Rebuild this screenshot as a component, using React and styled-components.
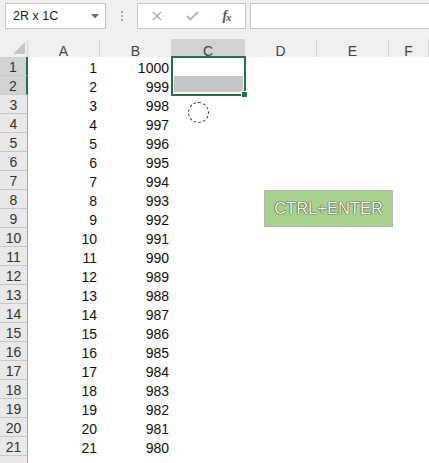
import styled, { createGlobalStyle } from 'styled-components';

const GlobalStyle = createGlobalStyle`
  body {
    margin: 0;
    background: #ffffff;
    font-family: 'Liberation Sans', Arial, sans-serif;
  }
`;

const Page = styled.div`
  position: relative;
  width: 429px;
  height: 463px;
  overflow: hidden;
  background: #ffffff;
`;

const Toolbar = styled.div`
  display: flex;
  align-items: flex-start;
  height: 39px;
  padding: 3px 0 0 5px;
  box-sizing: border-box;
  background: #f0f0f0;
`;

const NameBox = styled.div`
  display: flex;
  align-items: center;
  justify-content: space-between;
  width: 101px;
  height: 26px;
  padding: 0 6px 0 7px;
  box-sizing: border-box;
  background: #ffffff;
  border: 1px solid #c6c6c6;
  font-size: 12.5px;
  color: #222222;
`;

const Grip = styled.div`
  display: flex;
  flex-direction: column;
  align-items: center;
  justify-content: center;
  gap: 2px;
  width: 31px;
  height: 26px;
`;

const GripDot = styled.span`
  width: 2px;
  height: 2px;
  background: #a8a8a8;
`;

const FormulaButtons = styled.div`
  display: flex;
  align-items: center;
  width: 109px;
  height: 26px;
  box-sizing: border-box;
  background: #ffffff;
  border: 1px solid #c6c6c6;
`;

const FormulaButton = styled.div`
  display: flex;
  align-items: center;
  justify-content: center;
  width: ${(p) => p.$w}px;
  height: 100%;
`;

const Fx = styled.span`
  font-family: 'Liberation Serif', 'Times New Roman', serif;
  font-style: italic;
  font-weight: bold;
  font-size: 14px;
  color: #555555;
  letter-spacing: -1px;

  sub {
    font-size: 11px;
    vertical-align: -1px;
  }
`;

const FormulaInput = styled.div`
  flex: 1;
  height: 26px;
  margin: 0 -2px 0 4px;
  box-sizing: border-box;
  background: #ffffff;
  border: 1px solid #c6c6c6;
`;

const Sheet = styled.div`
  position: relative;
  display: grid;
  grid-template-columns: 28px 72px 72px 73px 72px 72px 1fr;
  grid-template-rows: 18px;
  grid-auto-rows: 19px;
`;

const Corner = styled.div`
  position: relative;
  background: #f0f0f0;
  border-right: 1px solid #d4d4d4;
  box-sizing: border-box;
`;

const CornerTriangle = styled.div`
  position: absolute;
  right: 2px;
  bottom: 3px;
  width: 0;
  height: 0;
  border-left: 12px solid transparent;
  border-bottom: 12px solid #c6c6c6;
`;

const ColHeader = styled.div`
  display: flex;
  align-items: flex-end;
  justify-content: center;
  height: 18px;
  box-sizing: border-box;
  line-height: 12px;
  font-size: 14px;
  color: #444444;
  background: ${(p) => (p.$active ? '#d2d2d2' : '#f0f0f0')};
  border-right: 1px solid #d4d4d4;
`;

const RowHeader = styled.div`
  display: flex;
  align-items: flex-end;
  justify-content: center;
  height: 19px;
  padding-bottom: 1px;
  box-sizing: border-box;
  line-height: 14px;
  font-size: 14px;
  color: #333333;
  background: ${(p) => (p.$active ? '#d2d2d2' : '#e9e9e9')};
  border-bottom: 1px solid #c8c8c8;
  border-right: ${(p) => (p.$active ? '2px solid #217346' : '1px solid #a6a6a6')};
`;

const Cell = styled.div`
  display: flex;
  align-items: flex-end;
  justify-content: flex-end;
  height: 19px;
  padding: 0 3px 1px 3px;
  box-sizing: border-box;
  line-height: 14px;
  font-size: 14px;
  color: #111111;
`;

const Selection = styled.div`
  position: absolute;
  left: 171px;
  top: 17px;
  width: 75px;
  height: 40px;
  box-sizing: border-box;
  border: 2px solid #217346;
  display: flex;
  flex-direction: column;
  justify-content: flex-end;
  padding: 0 1px 2px 1px;
`;

const SelectedFill = styled.div`
  height: 16px;
  background: #c6c6c6;
`;

const FillHandle = styled.div`
  position: absolute;
  right: -4px;
  bottom: -4px;
  width: 5px;
  height: 5px;
  background: #217346;
  border: 1px solid #ffffff;
`;

const CursorRing = styled.div`
  position: absolute;
  left: 188px;
  top: 102px;
  width: 21px;
  height: 21px;
  box-sizing: border-box;
  border: 1px dashed #333333;
  border-radius: 50%;
`;

const KeyCaption = styled.div`
  position: absolute;
  left: 264px;
  top: 190px;
  width: 129px;
  height: 37px;
  box-sizing: border-box;
  display: flex;
  align-items: center;
  justify-content: center;
  background: #a9d18e;
  border: 1px solid #b4b4b4;
  font-size: 16.5px;
  color: #ffffff;
  text-shadow: 0 0 1px #111111, 0 0 1px #111111;
`;

const columns = ['A', 'B', 'C', 'D', 'E', 'F'];
const rows = Array.from({ length: 22 }, (_, i) => i + 1);

export default function App() {
  return (
    <Page>
      <GlobalStyle />
      <Toolbar>
        <NameBox>
          <span>2R x 1C</span>
          <svg width="8" height="5" viewBox="0 0 8 5">
            <path d="M0 0 H8 L4 4.5 Z" fill="#6f6f6f" />
          </svg>
        </NameBox>
        <Grip>
          <GripDot />
          <GripDot />
          <GripDot />
        </Grip>
        <FormulaButtons>
          <FormulaButton $w={38}>
            <svg width="10" height="10" viewBox="0 0 10 10">
              <path d="M1 1 L9 9 M9 1 L1 9" stroke="#b0b0b0" strokeWidth="1.4" />
            </svg>
          </FormulaButton>
          <FormulaButton $w={32}>
            <svg width="13" height="10" viewBox="0 0 13 10">
              <path d="M1 5 L4.5 8.5 L12 1" stroke="#b4b4b4" strokeWidth="1.8" fill="none" />
            </svg>
          </FormulaButton>
          <FormulaButton $w={37}>
            <Fx>
              f<sub>x</sub>
            </Fx>
          </FormulaButton>
        </FormulaButtons>
        <FormulaInput />
      </Toolbar>

      <Sheet>
        <Corner>
          <CornerTriangle />
        </Corner>
        {columns.map((c) => (
          <ColHeader key={c} $active={c === 'C'}>
            {c}
          </ColHeader>
        ))}
        {rows.map((r) => [
          <RowHeader key={`h${r}`} $active={r <= 2}>
            {r <= 21 ? r : ''}
          </RowHeader>,
          <Cell key={`a${r}`}>{r <= 21 ? r : ''}</Cell>,
          <Cell key={`b${r}`}>{r <= 21 ? 1001 - r : ''}</Cell>,
          <Cell key={`c${r}`} />,
          <Cell key={`d${r}`} />,
          <Cell key={`e${r}`} />,
          <Cell key={`f${r}`} />,
        ])}
        <Selection>
          <SelectedFill />
          <FillHandle />
        </Selection>
      </Sheet>

      <CursorRing />
      <KeyCaption>CTRL+ENTER</KeyCaption>
    </Page>
  );
}
